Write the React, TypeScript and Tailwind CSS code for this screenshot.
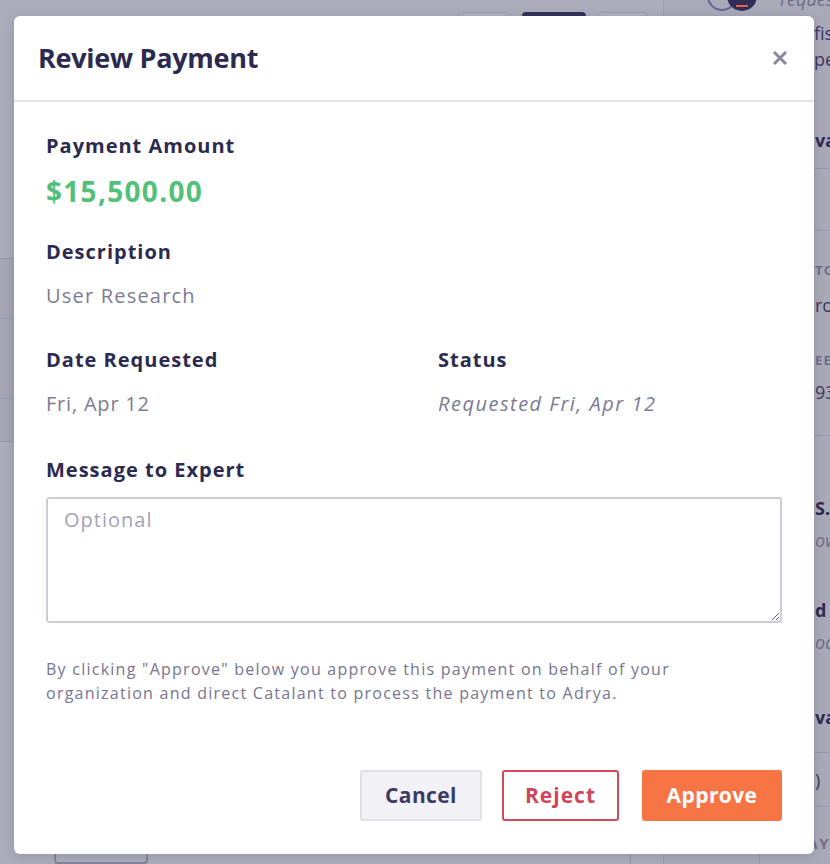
import { useState } from "react";

const font = { fontFamily: '"Open Sans", "Liberation Sans", sans-serif' };

function BackdropPage() {
  return (
    <div className="flex h-[864px] w-[830px] overflow-hidden bg-[#adacba]">
      {/* main column */}
      <div className="flex w-[663px] shrink-0 flex-col">
        <div className="flex justify-end gap-3 pr-[15px] pt-3">
          <div className="h-9 w-[52px] rounded border border-[#9f9eb0] bg-[#b1b0be]" />
          <div className="h-9 w-16 rounded bg-[#34325a]" />
          <div className="h-9 w-[50px] rounded border border-[#9f9eb0] bg-[#b1b0be]" />
        </div>
        <div className="h-[211px] border-b border-[#9897aa]" />
        <div className="bg-[#a6a5b5]">
          <div className="h-[60px] border-b border-[#8f9fbd]" />
          <div className="h-[80px] border-b border-[#8f9fbd]" />
          <div className="h-[43px] border-b border-[#9897aa]" />
        </div>
        <div className="flex-1" />
        <div className="flex h-[40px] items-end">
          <div className="ml-[54px] h-[34px] w-[94px] rounded border-2 border-[#85849a]" />
          <div className="ml-auto h-full w-[33px] border-l border-[#9897aa]" />
        </div>
      </div>
      {/* right column */}
      <div
        className="flex min-w-0 flex-1 flex-col overflow-hidden whitespace-nowrap border-l border-[#9e9dae] bg-[#aaa9b8] text-[18px] leading-[26px] text-[#2d2b50]"
        style={font}
      >
        <div className="relative h-5 shrink-0">
          <div className="absolute -top-[19px] left-[43px] h-[30px] w-[30px] rounded-full border-2 border-[#6a5d9e]" />
          <div className="absolute -top-[19px] left-[63px] flex h-[30px] w-[30px] items-end justify-center rounded-full bg-[#302e58] pb-[4px]">
            <div className="h-[2px] w-3 bg-[#e0663c]" />
          </div>
          <div className="absolute -top-[14px] left-[116px] italic text-[#6f6e8a]">requested</div>
        </div>
        <div className="ml-[150px] h-[26px] shrink-0 text-[#3a3860]">fiscal</div>
        <div className="ml-[150px] h-[26px] shrink-0 text-[#3a3860]">period</div>
        <div className="ml-[151px] mt-[55px] h-[26px] shrink-0 font-bold">va</div>
        <div className="mt-[15px] h-[63px] shrink-0 border-y border-[#9a99ab]" />
        <div className="ml-[151px] mt-[29px] h-5 shrink-0 text-[13px] font-bold leading-5 tracking-widest text-[#6f6e88]">TOTAL</div>
        <div className="ml-[151px] mt-3 h-[26px] shrink-0 text-[#3a3860]">ro</div>
        <div className="ml-[151px] mt-8 h-5 shrink-0 text-[13px] font-bold leading-5 tracking-widest text-[#6f6e88]">EEE</div>
        <div className="ml-[151px] mt-[9px] h-[26px] shrink-0 text-[#3a3860]">93</div>
        <div className="mt-[30px] h-px shrink-0 bg-[#9a99ab]" />
        <div className="ml-[151px] mt-[59px] h-[26px] shrink-0 font-bold">S.</div>
        <div className="ml-[151px] mt-[6px] h-[26px] shrink-0 italic text-[#6f6e8a]">ow</div>
        <div className="ml-[151px] mt-11 h-[26px] shrink-0 font-bold">d</div>
        <div className="ml-[151px] mt-[6px] h-[26px] shrink-0 italic text-[#6f6e8a]">oa</div>
        <div className="ml-[151px] mt-[49px] h-[26px] shrink-0 font-bold">va</div>
        <div className="mt-[22px] flex h-[55px] shrink-0 items-center border-y border-[#9a99ab]">
          <div className="ml-[151px] text-[#3a3860]">)</div>
        </div>
        <div className="flex flex-1 items-start">
          <div className="h-full w-[103px] border-r border-[#9a99ab]" />
          <div className="ml-[47px] mt-[23px] text-[15px] font-bold tracking-widest text-[#6f6e88]">AY</div>
        </div>
      </div>
    </div>
  );
}

function CloseIcon() {
  return (
    <svg width="16" height="16" viewBox="0 0 16 16" fill="none">
      <path d="M2 2 14 14M14 2 2 14" stroke="#8a89a0" strokeWidth="3" />
    </svg>
  );
}

export default function App() {
  const [message, setMessage] = useState("");

  return (
    <div className="relative h-[864px] w-[830px] overflow-hidden" style={font}>
      <BackdropPage />

      {/* Modal */}
      <div className="absolute inset-0 pl-[14px] pt-4">
        <div className="w-[800px] overflow-hidden rounded-md bg-white shadow-[0_2px_12px_rgba(40,38,70,0.18)]">
          <div className="flex h-[86px] items-center justify-between border-b-2 border-[#e4e3ea] pl-6 pr-[26px]">
            <h1 className="text-[27px] font-bold tracking-[-0.01em] text-[#2c2a50]">Review Payment</h1>
            <button className="text-[#8a89a0]" aria-label="Close">
              <CloseIcon />
            </button>
          </div>

          <div className="px-8 pb-[33px] pt-[30px] text-[#2c2a50]">
            <div className="text-[20px] font-bold leading-[28px] tracking-[1px]">Payment Amount</div>
            <div className="mt-[13px] text-[28px] font-bold leading-[36px] tracking-[1.3px] text-[#53c07a]">$15,500.00</div>

            <div className="mt-[29px] text-[20px] font-bold leading-[28px] tracking-[1px]">Description</div>
            <div className="mt-4 text-[20px] leading-[28px] tracking-[1.2px] text-[#7c7b95]">User Research</div>

            <div className="mt-9 grid grid-cols-[392px_1fr]">
              <div>
                <div className="text-[20px] font-bold leading-[28px] tracking-[1px]">Date Requested</div>
                <div className="mt-4 text-[20px] leading-[28px] tracking-[0.8px] text-[#7c7b95]">Fri, Apr 12</div>
              </div>
              <div>
                <div className="text-[20px] font-bold leading-[28px] tracking-[1px]">Status</div>
                <div className="mt-4 text-[20px] italic leading-[28px] tracking-[1.5px] text-[#7c7b95]">Requested Fri, Apr 12</div>
              </div>
            </div>

            <div className="mt-[38px] text-[20px] font-bold leading-[28px] tracking-[1px]">Message to Expert</div>
            <textarea
              value={message}
              onChange={(e) => setMessage(e.target.value)}
              placeholder="Optional"
              className="mt-[13px] block h-[126px] w-full rounded-[3px] border-2 border-[#cdccd8] px-4 py-[7px] text-[20px] leading-[28px] tracking-[1px] text-[#2c2a50] outline-none placeholder:text-[#a4a3b6]"
              style={font}
            />

            <p className="mt-[34px] text-[16px] leading-[24px] tracking-[1.25px] text-[#76758f]">
              By clicking "Approve" below you approve this payment on behalf of your
              <br />
              organization and direct Catalant to process the payment to Adrya.
            </p>

            <div className="mt-[65px] flex justify-end">
              <button className="h-[51px] w-[122px] rounded-[3px] border-2 border-[#e2e1e8] bg-[#f2f2f6] text-[21px] font-bold tracking-[0.4px] text-[#3d3b63]">
                Cancel
              </button>
              <button className="ml-5 h-[51px] w-[117px] rounded-[3px] border-2 border-[#d04a5c] bg-white text-[21px] font-bold tracking-[1px] text-[#cf4659]">
                Reject
              </button>
              <button className="ml-[23px] h-[51px] w-[140px] rounded-[3px] bg-[#f77545] text-[21px] font-bold tracking-[0.4px] text-white">
                Approve
              </button>
            </div>
          </div>
        </div>
      </div>
    </div>
  );
}
